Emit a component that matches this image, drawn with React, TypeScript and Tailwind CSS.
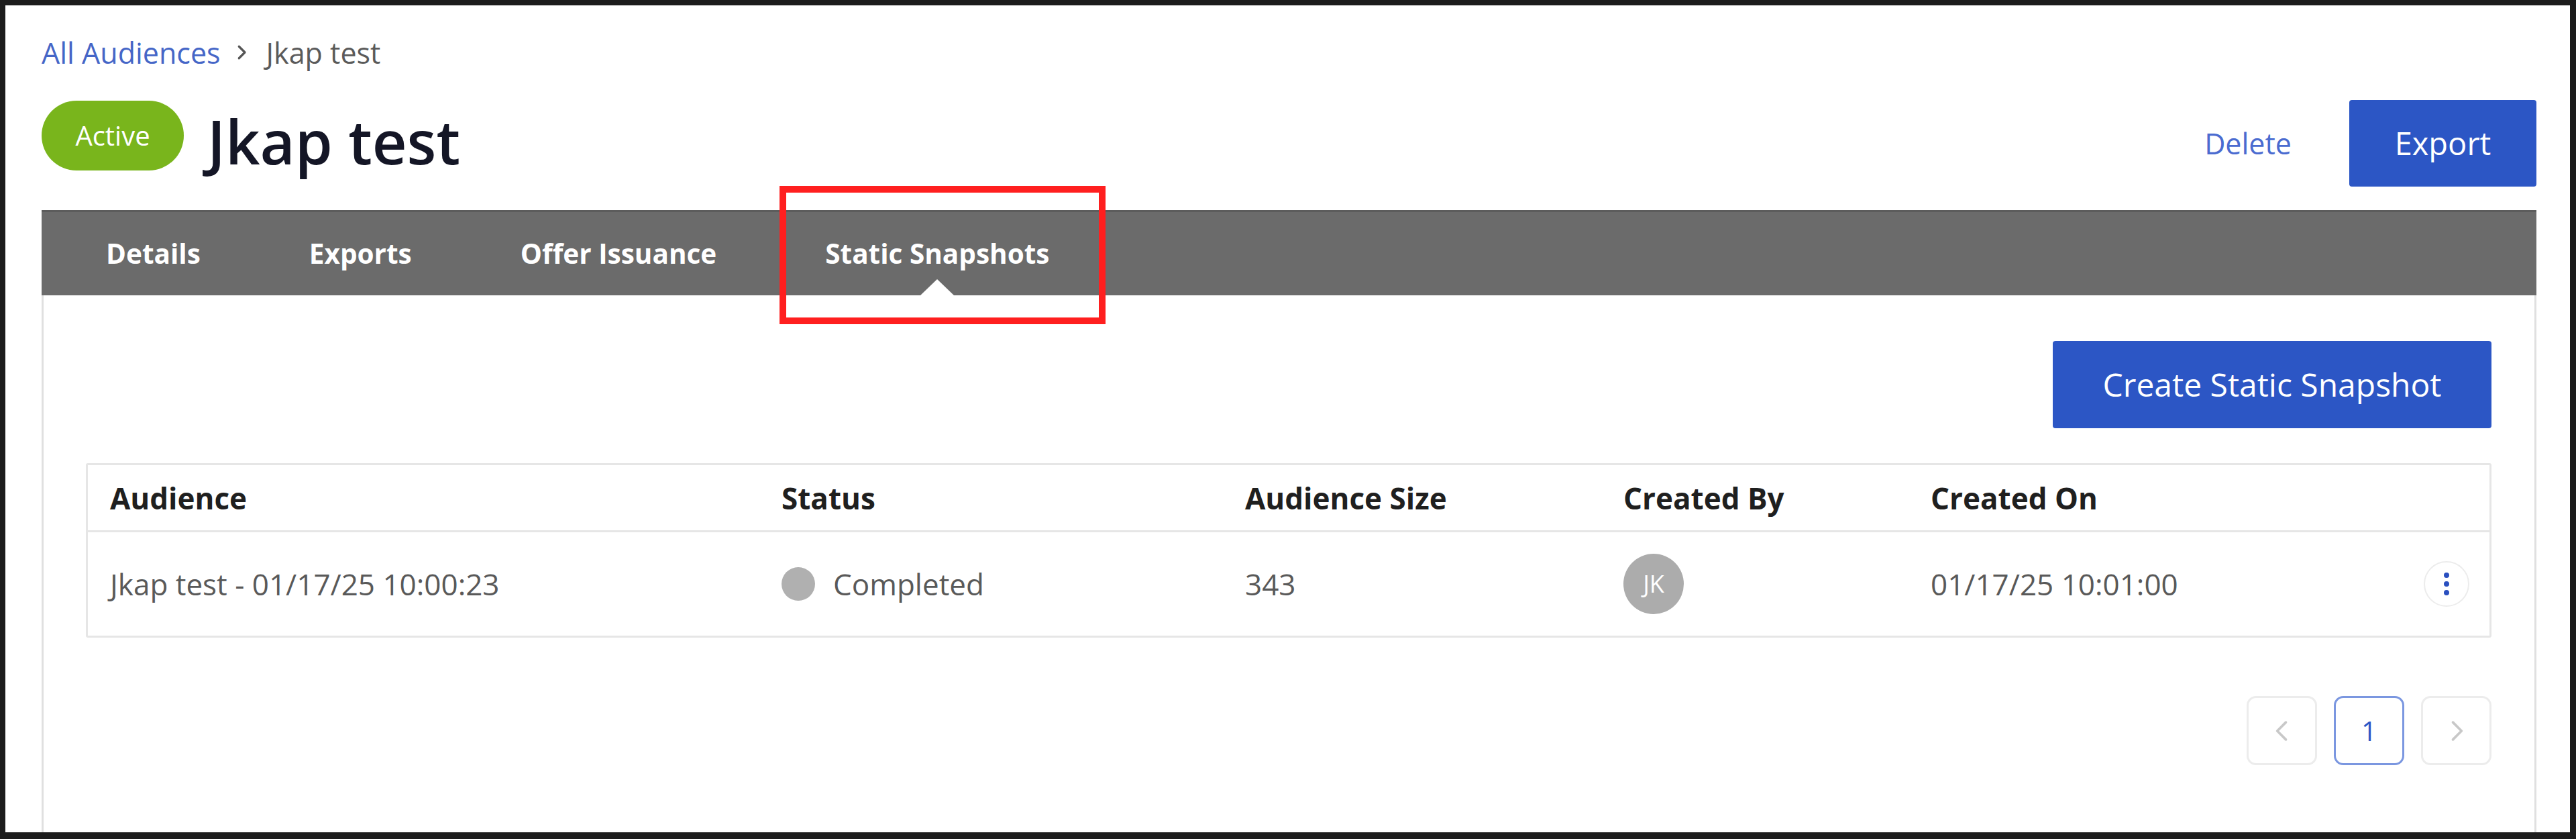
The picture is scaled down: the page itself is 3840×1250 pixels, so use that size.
import React from "react";

function Chevron({ dir, className }: { dir: "left" | "right"; className?: string }) {
  return (
    <svg viewBox="0 0 24 24" className={className} fill="none" stroke="currentColor" strokeWidth={2} strokeLinecap="round" strokeLinejoin="round">
      {dir === "left" ? <path d="M15 5l-7 7 7 7" /> : <path d="M9 5l7 7-7 7" />}
    </svg>
  );
}

export default function App() {
  const tabs = ["Details", "Exports", "Offer Issuance", "Static Snapshots"];
  return (
    <div className="relative w-[3840px] h-[1250px] bg-white border-solid border-[#1c1c1c] border-t-[8px] border-l-[8px] border-r-[9px] border-b-[10px] font-['Open_Sans',sans-serif] flex flex-col pl-[54px] pr-[50px]">
      {/* Breadcrumb */}
      <div className="mt-[42px] h-[56px] flex items-center text-[43px] leading-none">
        <span className="text-[#4566c7]">All Audiences</span>
        <Chevron dir="right" className="w-[30px] h-[30px] ml-[16px] mr-[22px] text-[#555] [stroke-width:2.6]" />
        <span className="text-[#5a5a5a]">Jkap test</span>
      </div>

      {/* Title row */}
      <div className="mt-[42px] h-[130px] flex items-center justify-between">
        <div className="flex items-center">
          <div className="w-[212px] h-[104px] rounded-full bg-[#79b51c] flex items-center justify-center text-white text-[40px] leading-none mb-[22px]">
            Active
          </div>
          <div className="ml-[35px] text-[90px] font-semibold leading-none text-[#141626] pb-[6px]">Jkap test</div>
        </div>
        <div className="flex items-center">
          <span className="text-[43px] leading-none text-[#4a6bd0] mr-[86px]">Delete</span>
          <button className="w-[279px] h-[129px] rounded-[4px] bg-[#2c56c5] text-white text-[47px] leading-none flex items-center justify-center">
            Export
          </button>
        </div>
      </div>

      {/* Tab bar */}
      <div className="mt-[35px] h-[127px] bg-[#6b6b6b] border-t-[3px] border-[#5c5c5c] flex items-stretch pl-[15px]">
        {tabs.map((t, i) => (
          <div key={t} className="relative px-[81px] flex items-center text-white font-bold text-[40.5px] leading-none">
            {t}
            {i === 3 && (
              <div className="absolute bottom-0 left-1/2 -translate-x-1/2 w-0 h-0 border-l-[25px] border-r-[25px] border-b-[24px] border-l-transparent border-r-transparent border-b-white" />
            )}
          </div>
        ))}
      </div>

      {/* Content panel */}
      <div className="flex-1 border-x-[3px] border-[#e0e0e0] pl-[63px] pr-[64px] pt-[68px] flex flex-col">
        <div className="flex justify-end">
          <button className="w-[654px] h-[130px] rounded-[4px] bg-[#2c56c5] text-white text-[48px] leading-none flex items-center justify-center">
            Create Static Snapshot
          </button>
        </div>

        {/* Table */}
        <div className="mt-[52px] border-[3px] border-[#e6e6e6] rounded-[3px]">
          <div className="grid grid-cols-[1001px_691px_564px_458px_1fr] h-[100px] items-center border-b-[3px] border-[#e6e6e6] text-[44px] font-bold text-[#1f1f1f] leading-none">
            <div className="pl-[33px]">Audience</div>
            <div className="pl-[33px]">Status</div>
            <div className="pl-[33px]">Audience Size</div>
            <div className="pl-[33px]">Created By</div>
            <div className="pl-[33px]">Created On</div>
          </div>
          <div className="grid grid-cols-[1001px_691px_564px_458px_1fr] h-[154px] items-center text-[44px] text-[#595959] leading-none">
            <div className="pl-[33px]">Jkap test - 01/17/25 10:00:23</div>
            <div className="pl-[33px] flex items-center">
              <span className="w-[50px] h-[50px] rounded-full bg-[#b0b0b0] mr-[27px]" />
              Completed
            </div>
            <div className="pl-[33px]">343</div>
            <div className="pl-[33px]">
              <div className="w-[90px] h-[90px] rounded-full bg-[#acacac] flex items-center justify-center text-white text-[36px] leading-none">
                JK
              </div>
            </div>
            <div className="pl-[33px] flex items-center justify-between pr-[30px]">
              <span>01/17/25 10:01:00</span>
              <div className="w-[68px] h-[68px] rounded-full border-[2px] border-[#ececec] flex flex-col items-center justify-center gap-[5px]">
                <span className="w-[8px] h-[8px] rounded-full bg-[#2a4fbf]" />
                <span className="w-[8px] h-[8px] rounded-full bg-[#2a4fbf]" />
                <span className="w-[8px] h-[8px] rounded-full bg-[#2a4fbf]" />
              </div>
            </div>
          </div>
        </div>

        {/* Pagination */}
        <div className="mt-[87px] flex justify-end gap-[25px]">
          <div className="w-[105px] h-[103px] rounded-[14px] border-[3px] border-[#ececec] flex items-center justify-center text-[#c8c8c8]">
            <Chevron dir="left" className="w-[44px] h-[44px]" />
          </div>
          <div className="w-[105px] h-[103px] rounded-[14px] border-[3px] border-[#7b97e0] flex items-center justify-center text-[#2c56c5] text-[40px] leading-none">
            1
          </div>
          <div className="w-[105px] h-[103px] rounded-[14px] border-[3px] border-[#ececec] flex items-center justify-center text-[#c8c8c8]">
            <Chevron dir="right" className="w-[44px] h-[44px]" />
          </div>
        </div>
      </div>

      {/* Red annotation box */}
      <div className="absolute left-[1154px] top-[269px] w-[486px] h-[206px] border-[10px] border-[#ff1f1f] pointer-events-none" />
    </div>
  );
}
